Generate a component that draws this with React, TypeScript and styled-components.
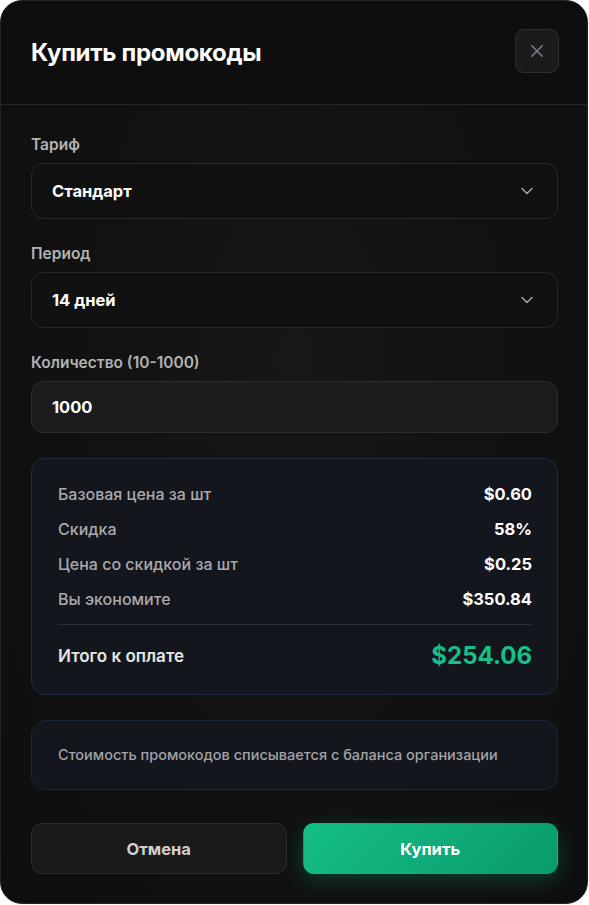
import React from 'react'
import styled, { createGlobalStyle } from 'styled-components'

const GlobalStyle = createGlobalStyle`
    * { box-sizing: border-box; }
    body {
        margin: 0;
        background: #ffffff;
        font-family: Inter, "Noto Sans", sans-serif;
    }
`

const Modal = styled.div`
    width: 588px;
    height: 904px;
    border-radius: 22px;
    border: 1px solid #232323;
    background: radial-gradient(ellipse at 50% 40%, #171717 0%, #111111 55%, #0e0e0e 100%);
    display: flex;
    flex-direction: column;
    overflow: hidden;
`

const Header = styled.div`
    display: flex;
    align-items: center;
    justify-content: space-between;
    height: 104px;
    padding: 0 28px 0 30px;
    border-bottom: 1px solid #262626;
    background: #0e0e0e;
`

const Title = styled.h2`
    margin: 0;
    font-size: 24px;
    font-weight: 700;
    color: #ffffff;
    letter-spacing: -0.3px;
`

const CloseButton = styled.button`
    width: 44px;
    height: 44px;
    border-radius: 9px;
    border: 1px solid #2e2e2e;
    background: #1b1b1c;
    display: flex;
    align-items: center;
    justify-content: center;
    padding: 0;
    margin-top: -3px;
    cursor: pointer;
`

const Body = styled.div`
    flex: 1;
    display: flex;
    flex-direction: column;
    gap: 25px;
    padding: 30px 29px 29px 30px;
`

const Field = styled.div`
    display: flex;
    flex-direction: column;
    gap: 8px;
`

const Label = styled.label`
    font-size: 15.5px;
    line-height: 20px;
    font-weight: 600;
    color: #b3b3b3;
`

const SelectBox = styled.div`
    height: 56px;
    display: flex;
    align-items: center;
    justify-content: space-between;
    padding: 0 20px 0 20px;
    border-radius: 12px;
    border: 1px solid #272727;
    background: #111111;
    font-size: 16.5px;
    font-weight: 700;
    color: #ffffff;
`

const InputBox = styled.div`
    height: 52px;
    display: flex;
    align-items: center;
    padding: 0 20px;
    border-radius: 12px;
    border: 1px solid #2b2b2b;
    background: #1c1c1c;
    font-size: 16.5px;
    font-weight: 700;
    color: #ffffff;
`

const SummaryCard = styled.div<{ $compact?: boolean }>`
    border-radius: 14px;
    border: 1px solid ${p => (p.$compact ? '#1b2636' : '#1e2b40')};
    background: #13161d;
    padding: ${p => (p.$compact ? '24px 26px' : '25px 25px 22px 26px')};
    display: flex;
    flex-direction: column;
    gap: 15px;
`

const Row = styled.div`
    display: flex;
    justify-content: space-between;
    align-items: center;
    line-height: 20px;
`

const RowLabel = styled.span`
    font-size: 16px;
    color: #a9a9ab;
    font-weight: 500;
`

const RowValue = styled.span`
    font-size: 16.5px;
    color: #ffffff;
    font-weight: 700;
`

const Divider = styled.div`
    height: 1px;
    background: #2a2e36;
`

const TotalRow = styled.div`
    display: flex;
    justify-content: space-between;
    align-items: center;
    line-height: 32px;
`

const TotalLabel = styled.span`
    font-size: 17px;
    font-weight: 600;
    color: #e6e6e6;
`

const TotalValue = styled.span`
    font-size: 24px;
    font-weight: 700;
    color: #17c08a;
`

const Note = styled.div`
    font-size: 14.5px;
    line-height: 20px;
    color: #a3a3a6;
    font-weight: 500;
`

const Actions = styled.div`
    display: grid;
    grid-template-columns: 1fr 1fr;
    gap: 16px;
    margin-top: 8px;
`

const Button = styled.button<{ $primary?: boolean }>`
    height: 51px;
    border-radius: 11px;
    font-family: inherit;
    font-size: 16.5px;
    font-weight: 700;
    cursor: pointer;
    border: 1px solid ${p => (p.$primary ? 'transparent' : '#2c2c2c')};
    color: ${p => (p.$primary ? '#ffffff' : '#d0d0d0')};
    background: ${p => (p.$primary ? 'linear-gradient(135deg, #15be87 0%, #0a9a6c 100%)' : '#1a1a1a')};
    box-shadow: ${p => (p.$primary ? '0 6px 22px rgba(16, 185, 129, 0.28)' : 'none')};
`

const Chevron = () => (
    <svg width="20" height="20" viewBox="0 0 24 24" fill="none" stroke="#a6a6a6" strokeWidth="1.8" strokeLinecap="round" strokeLinejoin="round">
        <path d="M6 9l6 6 6-6" />
    </svg>
)

const rows = [
    { label: 'Базовая цена за шт', value: '$0.60' },
    { label: 'Скидка', value: '58%' },
    { label: 'Цена со скидкой за шт', value: '$0.25' },
    { label: 'Вы экономите', value: '$350.84' },
]

export default function App() {
    return (
        <>
            <GlobalStyle />
            <Modal>
                <Header>
                    <Title>Купить промокоды</Title>
                    <CloseButton>
                        <svg width="18" height="18" viewBox="0 0 24 24" fill="none" stroke="#7d808b" strokeWidth="2" strokeLinecap="round">
                            <path d="M5 5l14 14M19 5L5 19" />
                        </svg>
                    </CloseButton>
                </Header>
                <Body>
                    <Field>
                        <Label>Тариф</Label>
                        <SelectBox>
                            Стандарт
                            <Chevron />
                        </SelectBox>
                    </Field>
                    <Field>
                        <Label>Период</Label>
                        <SelectBox>
                            14 дней
                            <Chevron />
                        </SelectBox>
                    </Field>
                    <Field>
                        <Label>Количество (10-1000)</Label>
                        <InputBox>1000</InputBox>
                    </Field>
                    <SummaryCard>
                        {rows.map(r => (
                            <Row key={r.label}>
                                <RowLabel>{r.label}</RowLabel>
                                <RowValue>{r.value}</RowValue>
                            </Row>
                        ))}
                        <Divider />
                        <TotalRow>
                            <TotalLabel>Итого к оплате</TotalLabel>
                            <TotalValue>$254.06</TotalValue>
                        </TotalRow>
                    </SummaryCard>
                    <SummaryCard $compact>
                        <Note>Стоимость промокодов списывается с баланса организации</Note>
                    </SummaryCard>
                    <Actions>
                        <Button>Отмена</Button>
                        <Button $primary>Купить</Button>
                    </Actions>
                </Body>
            </Modal>
        </>
    )
}
